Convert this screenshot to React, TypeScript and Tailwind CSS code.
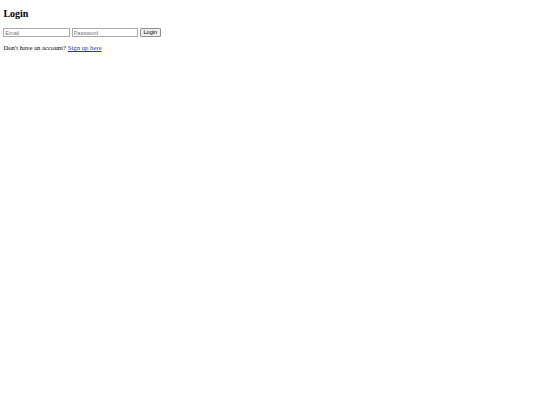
export default function App() {
  return (
    <div className="min-h-[405px] bg-white px-[3.4px] pt-[8.3px] text-black [font-family:'Liberation_Serif',serif]">
      <h2 className="mb-[8.3px] text-[10px] font-bold leading-[11.5px]">Login</h2>
      <form className="flex items-end gap-[1.8px]" onSubmit={(e) => e.preventDefault()}>
        <input
          type="email"
          placeholder="Email"
          className="h-[9px] w-[66.5px] border border-[#a9a9a9] px-[0.9px] text-[5.6px] leading-[6.4px] [font-family:'Liberation_Sans',Arial,sans-serif] placeholder:text-[#757575]"
        />
        <input
          type="password"
          placeholder="Password"
          className="h-[9px] w-[66.5px] border border-[#a9a9a9] px-[0.9px] text-[5.6px] leading-[6.4px] [font-family:'Liberation_Sans',Arial,sans-serif] placeholder:text-[#757575]"
        />
        <button
          type="submit"
          className="h-[9.1px] w-[20.6px] rounded-[1px] border border-[#8f8f8f] bg-[#efefef] text-[5.6px] leading-[6.4px] [font-family:'Liberation_Sans',Arial,sans-serif]"
        >
          Login
        </button>
      </form>
      <p className="mt-[6.7px] text-[6.72px] leading-[7.7px]">
        Don't have an account?{" "}
        <a href="#" className="text-[#2a2aee] underline decoration-[0.6px] [text-decoration-skip-ink:none]">
          Sign up here
        </a>
      </p>
    </div>
  );
}
